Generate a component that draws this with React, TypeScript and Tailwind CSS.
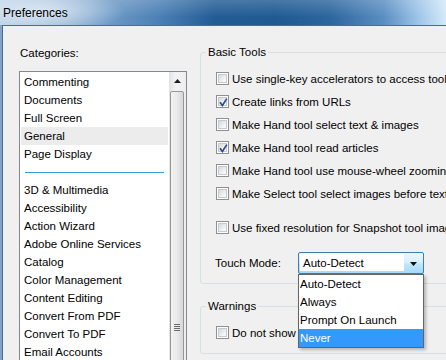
import React from "react";

const topCategories = ["Commenting", "Documents", "Full Screen", "General", "Page Display"];
const moreCategories = [
  "3D & Multimedia",
  "Accessibility",
  "Action Wizard",
  "Adobe Online Services",
  "Catalog",
  "Color Management",
  "Content Editing",
  "Convert From PDF",
  "Convert To PDF",
  "Email Accounts",
];

const basicTools = [
  { label: "Use single-key accelerators to access tools", checked: false },
  { label: "Create links from URLs", checked: true },
  { label: "Make Hand tool select text & images", checked: false },
  { label: "Make Hand tool read articles", checked: true },
  { label: "Make Hand tool use mouse-wheel zooming", checked: false },
  { label: "Make Select tool select images before text", checked: false },
];

const touchOptions = ["Auto-Detect", "Always", "Prompt On Launch", "Never"];

export default function App() {
  return (
    <div className="w-[446px] h-[360px] overflow-hidden flex flex-col bg-[#f0f0f0] text-black text-[11.5px] leading-[14px] font-['Liberation_Sans',Arial,sans-serif]">
      {/* Barra de título */}
      <div className="h-[25px] shrink-0 flex items-center pl-[3px] text-[12px] bg-[linear-gradient(180deg,rgba(255,255,255,0.18),rgba(255,255,255,0)_70%),radial-gradient(ellipse_90px_22px_at_35px_12px,rgba(220,232,244,0.95),rgba(220,232,244,0)),linear-gradient(90deg,#b7cde3_0%,#9dbad8_12%,#6f9bc7_24%,#4a7fb4_36%,#225c95_48%,#1f5a93_62%,#2c669e_74%,#5a8ec2_86%,#9fc6ea_94%,#d5e9f9_100%)]">
        <span className="text-black">Preferences</span>
      </div>

      <div className="flex flex-1">
        <div className="w-[2px] shrink-0 bg-[#7fa5cc]" />
        <div className="flex-1 flex items-start border-l border-t border-[#4d6b8a] bg-[#f0f0f0]">
          {/* Columna de categorías */}
          <div className="ml-[16px] mt-[20px] w-[168px] shrink-0">
            <div className="pl-[1px] h-[14px]">Categories:</div>
            <div className="mt-[11px] h-[320px] flex overflow-hidden border border-[#828790] bg-white">
              <div className="flex-1 pt-[1px]">
                {topCategories.map((c) => (
                  <div
                    key={c}
                    className={`mx-[1px] h-[18px] leading-[18px] pl-[3px] ${c === "General" ? "bg-[#ececec]" : ""}`}
                  >
                    {c}
                  </div>
                ))}
                <div className="h-[18px] flex items-center mx-[5px]">
                  <div className="h-px w-full bg-[#3c9ad6]" />
                </div>
                {moreCategories.map((c) => (
                  <div key={c} className="mx-[1px] h-[18px] leading-[18px] pl-[3px] whitespace-nowrap">
                    {c}
                  </div>
                ))}
              </div>
              <Scrollbar />
            </div>
          </div>

          {/* Columna de opciones */}
          <div className="ml-[13px] mt-[19px] w-[300px] shrink-0">
            <fieldset className="border border-[#d5dfe5] rounded-[3px]">
              <legend className="ml-[5px] px-[2px] leading-[14px]">Basic Tools</legend>
              <div className="pl-[15px] pt-[8px] pb-[9px]">
                {basicTools.map((t) => (
                  <CheckRow key={t.label} label={t.label} checked={t.checked} />
                ))}
                <div className="mt-[11px]">
                  <CheckRow label="Use fixed resolution for Snapshot tool images" />
                </div>
                <div className="mt-[13px] h-[22px] flex items-center">
                  <span className="w-[83px] shrink-0 -ml-px">Touch Mode:</span>
                  <ComboBox />
                </div>
              </div>
            </fieldset>

            <fieldset className="mt-[15px] border border-[#d5dfe5] rounded-[3px]">
              <legend className="ml-[5px] px-[2px] leading-[14px]">Warnings</legend>
              <div className="pl-[15px] pt-[8px] pb-[9px]">
                <CheckRow label="Do not show edit warnings" />
              </div>
            </fieldset>
          </div>
        </div>
      </div>
    </div>
  );
}

function Scrollbar() {
  return (
    <div className="w-[17px] shrink-0 flex flex-col bg-[linear-gradient(90deg,#e3e3e3,#f3f3f3_40%,#eeeeee)]">
      <div className="h-[17px] shrink-0 flex items-center justify-center">
        <svg width="7" height="4" viewBox="0 0 7 4">
          <path d="M0 4 L3.5 0 L7 4 Z" fill="#1f1f1f" />
        </svg>
      </div>
      <div className="mt-[2px] ml-px mr-[2px] h-[472px] shrink-0 rounded-[2px] border border-[#979797] bg-[linear-gradient(90deg,#f2f2f2,#ebebeb_45%,#d6d6d6)] flex items-center justify-center">
        <div className="flex flex-col gap-[1px]">
          <div className="w-[6px] h-px bg-[#6c6c6c]" />
          <div className="w-[6px] h-px bg-[#6c6c6c]" />
          <div className="w-[6px] h-px bg-[#6c6c6c]" />
          <div className="w-[6px] h-px bg-[#6c6c6c]" />
        </div>
      </div>
    </div>
  );
}

function Checkbox({ checked = false }: { checked?: boolean }) {
  return (
    <span className="relative w-[13px] h-[13px] shrink-0 flex border border-[#8e8f8f] bg-white p-[1px]">
      <span className="flex-1 border border-[#c6c9cd] bg-[linear-gradient(135deg,#d6d8db,#f4f4f4_70%,#fcfcfc)]" />
      {checked && (
        <svg className="absolute left-0 top-0" width="13" height="13" viewBox="0 0 13 13">
          <path d="M3 6.2 L5.4 9.4 L9.8 2.6" fill="none" stroke="#2c4a8f" strokeWidth="1.7" />
        </svg>
      )}
    </span>
  );
}

function CheckRow({ label, checked = false }: { label: string; checked?: boolean }) {
  return (
    <div className="h-[23px] flex items-center gap-[3px] whitespace-nowrap">
      <Checkbox checked={checked} />
      <span>{label}</span>
    </div>
  );
}

function ComboBox() {
  return (
    <div className="relative w-[126px] h-[22px] shrink-0">
      <div className="h-full flex border border-[#3c7fb1] rounded-[2px] bg-[linear-gradient(180deg,#eaf6fd,#d9f0fc_45%,#bee6fd_55%,#a7d9f5)]">
        <div className="flex-1 m-[1px] mb-[2px] mr-0 bg-white flex items-center pl-[3px]">Auto-Detect</div>
        <div className="w-[19px] flex items-center justify-center pt-[2px]">
          <svg width="7" height="4" viewBox="0 0 7 4">
            <path d="M0 0 L7 0 L3.5 4 Z" fill="#111" />
          </svg>
        </div>
      </div>

      {/* Lista desplegada */}
      <div className="absolute z-10 left-0 top-[22px] w-[126px] border border-[#646464] bg-white shadow-[2px_2px_3px_rgba(0,0,0,0.25)]">
        {touchOptions.map((o) => (
          <div
            key={o}
            className={`h-[18px] leading-[18px] pl-[1px] ${o === "Never" ? "bg-[#3399ff] text-white" : ""}`}
          >
            {o}
          </div>
        ))}
      </div>
    </div>
  );
}
